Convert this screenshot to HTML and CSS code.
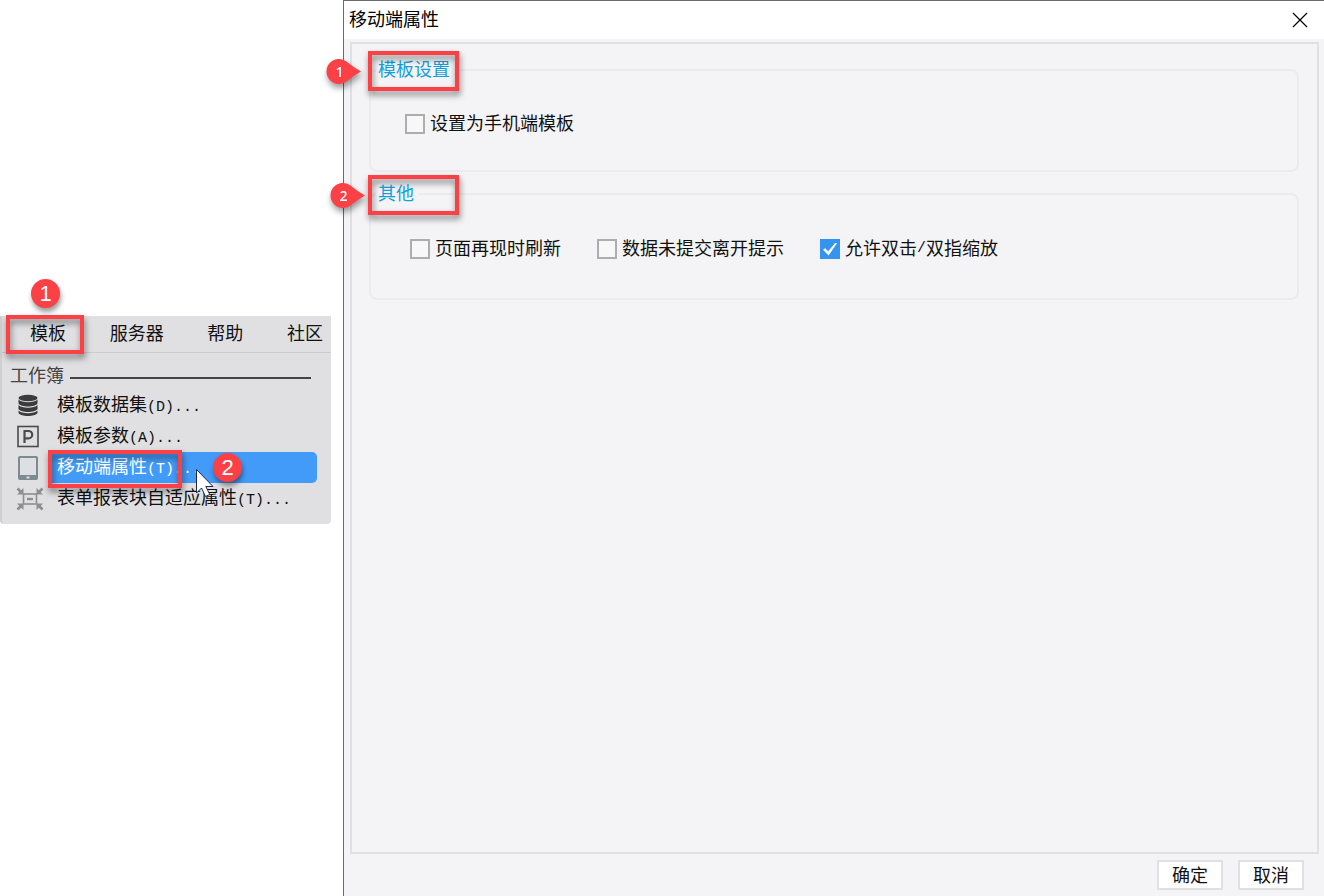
FILE: index.html
```html
<!DOCTYPE html>
<html lang="zh-CN">
<head>
<meta charset="utf-8">
<title>移动端属性</title>
<link rel="stylesheet" href="styles.css">
</head>
<body>
<aside class="menu">
  <nav class="menubar">
    <button class="tab" type="button">模板<span class="frame frame-tab"></span><span class="badge badge-tab">1</span></button>
    <button class="tab" type="button">服务器</button>
    <button class="tab" type="button">帮助</button>
    <button class="tab" type="button">社区</button>
  </nav>
  <div class="dropdown">
    <div class="group"><span>工作簿</span><span class="rule"></span></div>
    <button class="item" type="button">
      <svg class="icon" width="28" height="24" viewBox="0 0 28 24"><g fill="#3b3b3d"><ellipse cx="12" cy="4" rx="9.500" ry="3.200"/><path d="M2.500 5.500c3 3.600 16 3.600 19 0v4c-2 4-17 4-19 0z"/><path d="M2.500 11c3 3.600 16 3.600 19 0v4c-2 4-17 4-19 0z"/><path d="M2.500 16.500c3 3.600 16 3.600 19 0v2.500c-2 4-17 4-19 0z"/></g></svg>
      <span>模板数据集<span class="key">(D)...</span></span>
    </button>
    <button class="item" type="button">
      <svg class="icon" width="28" height="24" viewBox="0 0 28 24" fill="none" stroke="#4b4b4e"><rect x="2" y="1.500" width="20" height="20" stroke-width="1.600"/><path d="M8.500 18V6h4a3.700 3.700 0 0 1 0 7.400H8.500" stroke-width="2.200"/></svg>
      <span>模板参数<span class="key">(A)...</span></span>
    </button>
    <button class="item selected" type="button">
      <svg class="icon" width="28" height="24" viewBox="0 0 28 24"><rect x="2" y="0" width="20" height="24" rx="2" fill="#7c8a91"/><path d="M4 2h16v17H4z" fill="#dedfe2"/><path d="M10.500 21.500h3" stroke="#e0e1e3" stroke-width="2"/></svg>
      <span>移动端属性<span class="key">(T)...</span></span>
      <span class="frame frame-item"></span>
      <svg class="cursor" width="20" height="30" viewBox="0 0 20 30"><path d="M1.500 1.500v23.500l5-5 4 8.500 4.300-2-4-8h7.200z" fill="#fff" stroke="#1b2a44"/></svg>
      <span class="badge badge-item">2</span>
    </button>
    <button class="item" type="button">
      <svg class="icon" width="28" height="24" viewBox="0 0 28 24" fill="none" stroke="#8e8e91"><rect x="7.500" y="7" width="13" height="10" stroke-width="1.600"/><path d="M11 12h6" stroke-width="2.400"/><path d="M1.500 1.500l4 4M26.500 1.500l-4 4M1.500 22.500l4-4M26.500 22.500l-4-4" stroke-width="2.600"/><path d="M7.500 1v6.500H1zM20.500 1v6.500H27zM7.500 23v-6.500H1zM20.500 23v-6.500H27z" fill="#8e8e91" stroke="none"/></svg>
      <span>表单报表块自适应属性<span class="key">(T)...</span></span>
    </button>
  </div>
</aside>
<main class="dialog">
  <header class="titlebar">
    <h1>移动端属性</h1>
    <button class="close" type="button" aria-label="关闭"><svg width="16" height="16" viewBox="0 0 16 16"><path d="M1 1l14 14M15 1L1 15" stroke="#000" stroke-width="1.200"/></svg></button>
  </header>
  <section class="panel">
    <fieldset class="box">
      <legend>模板设置<span class="frame frame-legend"></span><span class="pin pin-first"><svg width="36" height="27" viewBox="0 0 36 27"><path d="M35 13.500Q27 9 20.500 3.500A12.500 12.500 0 1 0 20.500 23.500Q27 18 35 13.500z" fill="#fb4146"/></svg><b>1</b></span></legend>
      <div class="options">
        <label><input type="checkbox">设置为手机端模板</label>
      </div>
    </fieldset>
    <fieldset class="box box-other">
      <legend>其他<span class="frame frame-legend"></span><span class="pin"><svg width="36" height="27" viewBox="0 0 36 27"><path d="M35 13.500Q27 9 20.500 3.500A12.500 12.500 0 1 0 20.500 23.500Q27 18 35 13.500z" fill="#fb4146"/></svg><b>2</b></span></legend>
      <div class="options">
        <label><input type="checkbox">页面再现时刷新</label>
        <label><input type="checkbox">数据未提交离开提示</label>
        <label><input type="checkbox" checked>允许双击<span class="key">/</span>双指缩放</label>
      </div>
    </fieldset>
  </section>
  <footer class="actions">
    <button type="button">确定</button>
    <button type="button">取消</button>
  </footer>
</main>
</body>
</html>
```
FILE: styles.css
```css
* { box-sizing: border-box; }

body {
  margin: 0;
  min-height: 100vh;
  display: flex;
  gap: 12px;
  background: #fff;
  color: #111;
  font: 18px/24px "Liberation Sans", "Noto Sans CJK SC", sans-serif;
}

button {
  font: inherit;
  color: inherit;
  border: 0;
  padding: 0;
  background: none;
}

.key { font-family: "Liberation Mono", monospace; font-size: 15px; }

.menu {
  flex: none;
  align-self: flex-start;
  width: 331px;
  margin-top: 316px;
  background: #e0e0e2;
  border-left: 2px solid #cfcfd2;
  border-radius: 0 0 4px 4px;
}

.menubar {
  display: flex;
  justify-content: space-between;
  padding: 6px 8px 6px 28px;
  border-bottom: 1px solid #cbcbce;
}

.tab { position: relative; white-space: nowrap; }

.dropdown { padding: 8px 14px 10px 0; }

.group {
  display: flex;
  align-items: center;
  gap: 6px;
  height: 29px;
  padding: 0 6px 0 8px;
  color: #444;
}

.rule { flex: 1; height: 2px; margin-top: 4px; background: #444; }

.item {
  position: relative;
  display: flex;
  align-items: center;
  gap: 13px;
  width: 100%;
  height: 31px;
  padding-left: 14px;
  white-space: nowrap;
}

.item > span:first-of-type { padding-top: 2px; }

.item.selected {
  z-index: 1;
  color: #fff;
  background: linear-gradient(to right, transparent 48px, #429bf9 48px);
  border-radius: 5px;
}

.icon { flex: none; }

.frame {
  position: absolute;
  border: 4px solid #fb4146;
  filter: drop-shadow(1px 4px 3px rgba(0, 0, 0, 0.5));
}

.frame-tab { inset: -7px -18px -8px -24px; }
.frame-item { left: 46px; top: -2px; width: 134px; height: 38px; }
.frame-legend { left: -8px; top: -7px; width: 91px; height: 40px; }

.badge {
  position: absolute;
  width: 29px;
  height: 29px;
  border-radius: 50%;
  background: #fb4146;
  color: #fff;
  font-size: 22px;
  line-height: 29px;
  text-align: center;
  box-shadow: 1px 4px 5px rgba(0, 0, 0, 0.4);
}

.badge-tab { left: 1px; top: -43px; }
.badge-item { left: 211px; top: 1px; }
.cursor { position: absolute; left: 193px; top: 16px; }

.dialog {
  flex: 1;
  min-width: 0;
  display: flex;
  flex-direction: column;
  background: #f4f4f6;
  border: solid #6b6b6d;
  border-width: 1px 0 0 1px;
}

.titlebar {
  display: flex;
  align-items: center;
  justify-content: space-between;
  height: 38px;
  padding: 0 16px 0 5px;
  background: #fff;
  color: #000;
}

.titlebar h1 { margin: 0; font-size: 18px; font-weight: 400; }
.close { display: flex; }

.panel {
  flex: 1;
  margin: 3px 5px 0 6px;
  padding: 14px 18px 14px 17px;
  border: 2px solid #e0e0e2;
}

.box {
  margin: 0 0 10px;
  padding: 0 34px;
  border: 2px solid #ebebed;
  border-radius: 8px;
}

.box legend {
  position: relative;
  margin-left: -29px;
  padding-right: 4px;
  color: #149fdb;
}

.options {
  display: flex;
  gap: 36px;
  padding: 30px 0 34px;
}

.box-other .options { padding: 31px 5px 37px; }

.options label {
  display: flex;
  align-items: center;
  white-space: nowrap;
}

.options input {
  appearance: none;
  width: 20px;
  height: 20px;
  margin: 0 5px 0 0;
  border: 2px solid #adadaf;
  background: #f7f7f8;
}

.options input:checked {
  display: grid;
  place-items: center;
  border-color: #3494f0;
  background: #3494f0;
}

.options input:checked::before {
  content: "";
  width: 14px;
  height: 13px;
  background: #fff;
  clip-path: polygon(0 55%, 15% 45%, 37% 68%, 90% 0, 100% 6%, 40% 100%);
}

.pin {
  position: absolute;
  left: -46px;
  top: 0;
  display: flex;
  filter: drop-shadow(1px 4px 3px rgba(0, 0, 0, 0.4));
}

.pin-first { left: -50px; }

.pin b {
  position: absolute;
  left: 0;
  top: 0;
  width: 27px;
  color: #fff;
  font: 600 14px/27px "Open Sans", sans-serif;
  text-align: center;
}

.actions {
  display: flex;
  justify-content: flex-end;
  gap: 15px;
  padding: 6px 20px;
}

.actions button {
  width: 66px;
  height: 30px;
  padding-top: 2px;
  background: #fff;
  border: 2px solid #e0e0e3;
}
```
